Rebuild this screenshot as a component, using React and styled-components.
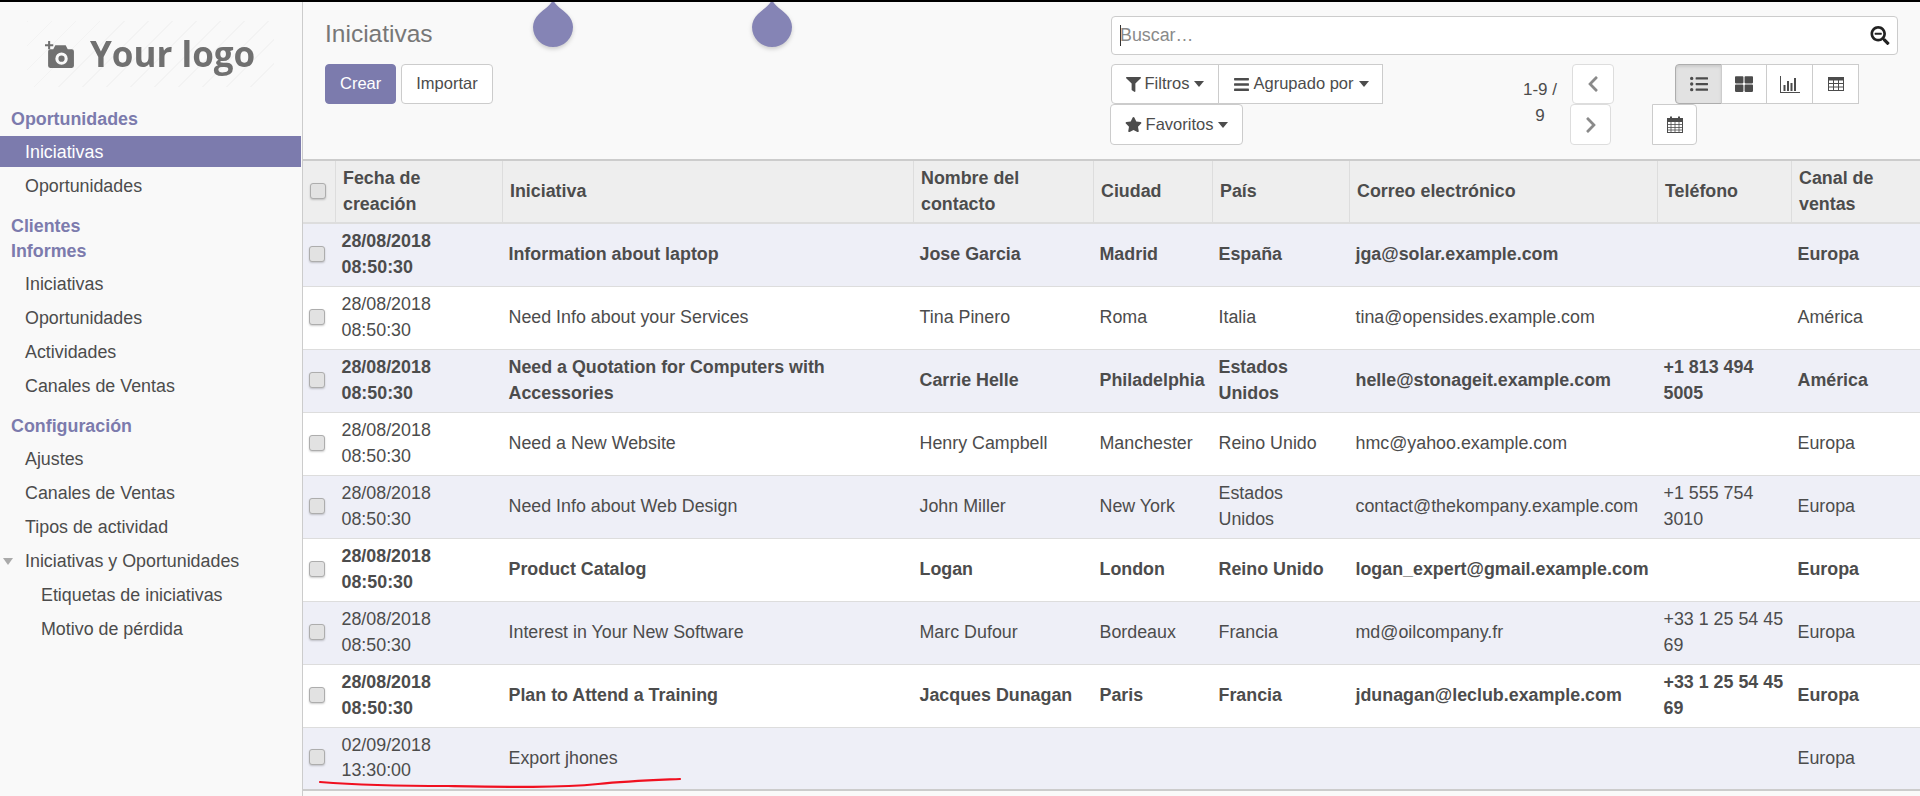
import React from "react";
import styled, { createGlobalStyle } from "styled-components";
import {
  FaFilter,
  FaBars,
  FaStar,
  FaChevronLeft,
  FaChevronRight,
  FaListUl,
  FaThLarge,
  FaSearchMinus,
} from "react-icons/fa";

const GlobalStyle = createGlobalStyle`
  html, body {
    margin: 0;
    padding: 0;
    height: 100%;
    overflow: hidden;
    background: #f9f9f9;
  }
  body {
    font-family: "Liberation Sans", Arial, sans-serif;
    font-size: 17.85px;
    line-height: 25.5px;
    color: #4c4c4c;
  }
`;

const Page = styled.div`
  position: relative;
  display: flex;
  height: 796px;
  box-sizing: border-box;
  border-top: 2px solid #000;
  overflow: hidden;
`;

// Sidebar
const Sidebar = styled.aside`
  flex: 0 0 302px;
  box-sizing: border-box;
  padding: 19px 1px 0 0;
`;

const LogoBox = styled.div`
  display: flex;
  align-items: center;
  width: 247px;
  height: 66px;
  margin: 0 0 19px 27px;
  padding-left: 18px;
  box-sizing: border-box;
  gap: 14px;
  background: repeating-linear-gradient(
    -45deg,
    #f9f9f9 0 16px,
    #f3f3f3 16px 17px
  );
`;

const LogoText = styled.span`
  font-family: "Open Sans", "Liberation Sans", sans-serif;
  font-weight: 700;
  font-size: 35px;
  line-height: 40px;
  color: #707070;
  filter: blur(0.6px);
  white-space: nowrap;
`;

const LogoIcon = styled.svg`
  width: 31px;
  height: 29px;
  filter: blur(0.4px);
  flex: none;
`;

const NavHeading = styled.div`
  height: 25px;
  line-height: 27px;
  padding-left: 11px;
  margin-top: ${(props) => props.$top || 0}px;
  font-weight: 700;
  color: #7c7bad;
`;

const NavItem = styled.div`
  position: relative;
  height: 31px;
  line-height: 33px;
  margin-top: ${(props) => (props.$first ? 5 : 3)}px;
  padding-left: ${(props) => (props.$sub ? 41 : 25)}px;
  background: ${(props) => (props.$active ? "#7c7bad" : "transparent")};
  color: ${(props) => (props.$active ? "#fff" : "#4c4c4c")};
  white-space: nowrap;
`;

const NavCaret = styled.span`
  position: absolute;
  left: 3px;
  top: 13px;
  border-left: 5px solid transparent;
  border-right: 5px solid transparent;
  border-top: 7px solid #aaa;
`;

// Main
const Main = styled.main`
  flex: 1;
  min-width: 0;
  border-left: 1px solid #ccc;
`;

const ControlPanel = styled.div`
  display: flex;
  height: 157px;
  box-sizing: border-box;
  padding: 14px 0 0 22px;
`;

const PanelLeft = styled.div`
  flex: 0 0 786px;
`;

const PanelRight = styled.div`
  flex: 0 0 787px;
`;

const Title = styled.div`
  height: 34px;
  line-height: 36px;
  font-size: 24.5px;
  color: #777;
`;

const ActionRow = styled.div`
  display: flex;
  gap: 5px;
  margin-top: 14px;
`;

const Button = styled.button`
  height: 40px;
  padding: 0 14px;
  box-sizing: border-box;
  font: inherit;
  font-size: 16.5px;
  border-radius: 4px;
  border: 1px solid ${(props) => (props.$primary ? "#7c7bad" : "#ccc")};
  background: ${(props) => (props.$primary ? "#7c7bad" : "#fff")};
  color: ${(props) => (props.$primary ? "#fff" : "#4c4c4c")};
`;

const SearchBox = styled.div`
  position: relative;
  display: flex;
  align-items: center;
  height: 39px;
  box-sizing: border-box;
  border: 1px solid #ccc;
  border-radius: 4px;
  background: #fff;
  padding: 0 7px 0 8px;
`;

const SearchInput = styled.input`
  flex: 1;
  min-width: 0;
  border: 0;
  outline: 0;
  padding: 0;
  background: transparent;
  font: inherit;
  color: #4c4c4c;
  &::placeholder {
    color: #8a8a8a;
    opacity: 1;
  }
`;

const Caret = styled.span`
  position: absolute;
  left: 8px;
  top: 8px;
  width: 1px;
  height: 21px;
  background: #333;
`;

const SearchIcon = styled(FaSearchMinus)`
  width: 20px;
  height: 19px;
  color: #222;
`;

const OptionsRow = styled.div`
  display: grid;
  grid-template-columns: 404px 55px 82px 207px;
  margin-top: 9px;
`;

const SearchOptions = styled.div`
  display: flex;
  flex-wrap: wrap;
  align-content: flex-start;
`;

const OptionButton = styled.button`
  display: flex;
  align-items: center;
  justify-content: center;
  gap: 4px;
  width: ${(props) => props.$width}px;
  height: ${(props) => (props.$tall ? 41 : 40)}px;
  margin-left: ${(props) => props.$shift || 0}px;
  padding: 0;
  box-sizing: border-box;
  font: inherit;
  font-size: 16.5px;
  color: #4c4c4c;
  background: #fff;
  border: 1px solid #ccc;
  border-radius: ${(props) => props.$radius || "4px"};
  svg {
    flex: none;
    color: #4c4c4c;
  }
`;

const DownArrow = styled.span`
  flex: none;
  margin-left: 1px;
  border-left: 5.5px solid transparent;
  border-right: 5.5px solid transparent;
  border-top: 6px solid #4c4c4c;
`;

const OptionBreak = styled.div`
  flex-basis: 100%;
  height: 0;
`;

const PagerText = styled.div`
  width: 44px;
  margin-left: 3px;
  padding-top: 13px;
  font-size: 17px;
  text-align: center;
  line-height: 26px;
`;

const PagerButtons = styled.div`
  display: flex;
  flex-direction: column;
  align-items: flex-start;
`;

const PagerButton = styled.button`
  display: flex;
  align-items: center;
  justify-content: center;
  width: ${(props) => props.$width}px;
  height: ${(props) => (props.$tall ? 41 : 40)}px;
  margin-left: ${(props) => props.$shift || 0}px;
  padding: 0;
  box-sizing: border-box;
  background: #fff;
  border: 1px solid #ddd;
  border-radius: 4px;
  color: #8a8a8a;
  font-size: 18px;
`;

const ViewSwitch = styled.div`
  display: flex;
  flex-direction: column;
  align-items: flex-start;
`;

const ViewRow = styled.div`
  display: flex;
  margin-left: ${(props) => props.$indent || 0}px;
`;

const ViewButton = styled.button`
  display: flex;
  align-items: center;
  justify-content: center;
  width: ${(props) => props.$width}px;
  height: ${(props) => (props.$tall ? 41 : 40)}px;
  padding: 0;
  box-sizing: border-box;
  margin-left: ${(props) => (props.$joined ? -1 : 0)}px;
  color: #4c4c4c;
  font-size: 18px;
  background: ${(props) => (props.$active ? "#e2e2e2" : "#fff")};
  border: 1px solid ${(props) => (props.$active ? "#adadad" : "#ccc")};
  border-radius: ${(props) => props.$radius || "0"};
  box-shadow: ${(props) =>
    props.$active ? "inset 0 2px 3px rgba(0, 0, 0, 0.1)" : "none"};
`;

// Table
const ListTable = styled.table`
  width: 1617px;
  table-layout: fixed;
  border-collapse: collapse;
  border-bottom: 2px solid #ccc;
`;

const HeadRow = styled.tr`
  height: 63px;
  background: #eee;
  border-top: 2px solid #ccc;
  border-bottom: 2px solid #ddd;
`;

const HeadCell = styled.th`
  padding: 0 7px 0 7.5px;
  text-align: left;
  font-weight: 700;
  vertical-align: middle;
  border-right: 1px solid #ddd;
  &:last-child {
    border-right: 0;
  }
`;

const Row = styled.tr`
  height: 63px;
  background: ${(props) => (props.$odd ? "#eeeff7" : "#fff")};
  border-bottom: 1px solid #ddd;
  font-weight: ${(props) => (props.$bold ? 700 : 400)};
`;

const Cell = styled.td`
  padding: 5px 6px 5px 6.5px;
  vertical-align: middle;
`;

const CheckCell = styled.td`
  padding: 0 0 2px 6px;
  vertical-align: middle;
`;

const CheckHead = styled.th`
  padding: 0 0 2px 7px;
  vertical-align: middle;
  border-right: 1px solid #ddd;
`;

const Check = styled.span`
  display: block;
  box-sizing: border-box;
  width: 16px;
  height: 16px;
  background: #e2e2e2;
  border: 1px solid #adadad;
  border-radius: 3px;
  box-shadow: 0 1px 2px rgba(0, 0, 0, 0.2);
`;

const DateValue = styled.span`
  display: block;
  max-width: 110px;
`;

// Overlays on top of the screenshot
const Drop = styled.svg`
  position: absolute;
  top: -2px;
  left: ${(props) => props.$left}px;
  width: 44px;
  height: 52px;
  filter: drop-shadow(0 2px 2px rgba(0, 0, 0, 0.18));
`;

const RedLine = styled.svg`
  position: absolute;
  left: 318px;
  top: 772px;
  width: 366px;
  height: 16px;
`;

const columns = [
  { width: 167, label: "Fecha de creación" },
  { width: 411, label: "Iniciativa" },
  { width: 180, label: "Nombre del contacto" },
  { width: 119, label: "Ciudad" },
  { width: 137, label: "País" },
  { width: 308, label: "Correo electrónico" },
  { width: 134, label: "Teléfono" },
  { width: 129, label: "Canal de ventas" },
];

const rows = [
  { bold: true, date: "28/08/2018 08:50:30", name: "Information about laptop", contact: "Jose Garcia", city: "Madrid", country: "España", email: "jga@solar.example.com", phone: "", channel: "Europa" },
  { date: "28/08/2018 08:50:30", name: "Need Info about your Services", contact: "Tina Pinero", city: "Roma", country: "Italia", email: "tina@opensides.example.com", phone: "", channel: "América" },
  { bold: true, date: "28/08/2018 08:50:30", name: "Need a Quotation for Computers with Accessories", contact: "Carrie Helle", city: "Philadelphia", country: "Estados Unidos", email: "helle@stonageit.example.com", phone: "+1 813 494 5005", channel: "América" },
  { date: "28/08/2018 08:50:30", name: "Need a New Website", contact: "Henry Campbell", city: "Manchester", country: "Reino Unido", email: "hmc@yahoo.example.com", phone: "", channel: "Europa" },
  { date: "28/08/2018 08:50:30", name: "Need Info about Web Design", contact: "John Miller", city: "New York", country: "Estados Unidos", email: "contact@thekompany.example.com", phone: "+1 555 754 3010", channel: "Europa" },
  { bold: true, date: "28/08/2018 08:50:30", name: "Product Catalog", contact: "Logan", city: "London", country: "Reino Unido", email: "logan_expert@gmail.example.com", phone: "", channel: "Europa" },
  { date: "28/08/2018 08:50:30", name: "Interest in Your New Software", contact: "Marc Dufour", city: "Bordeaux", country: "Francia", email: "md@oilcompany.fr", phone: "+33 1 25 54 45 69", channel: "Europa" },
  { bold: true, date: "28/08/2018 08:50:30", name: "Plan to Attend a Training", contact: "Jacques Dunagan", city: "Paris", country: "Francia", email: "jdunagan@leclub.example.com", phone: "+33 1 25 54 45 69", channel: "Europa" },
  { date: "02/09/2018 13:30:00", name: "Export jhones", contact: "", city: "", country: "", email: "", phone: "", channel: "Europa" },
];

const ChartIcon = () => (
  <svg width="20" height="17" viewBox="0 0 20 17" fill="#4c4c4c">
    <path d="M0 0h1v16h19v1H0z" />
    <rect x="3.500" y="9" width="2" height="6" />
    <rect x="7" y="5" width="2" height="10" />
    <rect x="10.500" y="7" width="2" height="8" />
    <rect x="14" y="2" width="2" height="13" />
  </svg>
);

const TableIcon = () => (
  <svg width="16" height="14" viewBox="0 0 16 14" fill="none" stroke="#4c4c4c">
    <path d="M0 0h16v3.500H0z" fill="#4c4c4c" stroke="none" />
    <rect x="0.500" y="0.500" width="15" height="13" />
    <path d="M0.500 6.500h15M0.500 10h15M5.500 3v11M10.500 3v11" />
  </svg>
);

const CalendarIcon = () => (
  <svg width="16" height="17" viewBox="0 0 16 17" fill="none" stroke="#4c4c4c">
    <rect x="0.500" y="2.500" width="15" height="14" />
    <path d="M0.500 8.500h15M0.500 11.500h15M0.500 14h15M4 5.500v11M8 5.500v11M12 5.500v11" strokeWidth="0.8" />
    <path d="M0.500 2.500h15v3h-15z" fill="#4c4c4c" />
    <path d="M4 0.500v3M12 0.500v3" strokeWidth="2" />
  </svg>
);

const DropShape = ({ left }) => (
  <Drop $left={left} viewBox="0 0 44 52">
    <path
      d="M22 0 C25 6 31 9 36 14 C40 18 42 22.500 42 27 A20 20 0 0 1 2 27 C2 22.500 4 18 8 14 C13 9 19 6 22 0 Z"
      fill="#8584b5"
    />
  </Drop>
);

export default function App() {
  return (
    <>
      <GlobalStyle />
      <Page>
        <Sidebar>
          <LogoBox>
            <LogoIcon viewBox="0 0 30 28" fill="#707070">
              <path d="M0 4h3V1h2v3h3v2H5v3H3V6H0z" />
              <path
                fillRule="evenodd"
                d="M5 9h3l2-4h10l2 4h4a2 2 0 0 1 2 2v14a2 2 0 0 1-2 2H5a2 2 0 0 1-2-2V11a2 2 0 0 1 2-2zm11 3a6 6 0 1 0 0 12 6 6 0 0 0 0-12zm0 3a3 3 0 1 1 0 6 3 3 0 0 1 0-6z"
              />
            </LogoIcon>
            <LogoText>Your logo</LogoText>
          </LogoBox>
          <NavHeading>Oportunidades</NavHeading>
          <NavItem $first $active>Iniciativas</NavItem>
          <NavItem>Oportunidades</NavItem>
          <NavHeading $top={12}>Clientes</NavHeading>
          <NavHeading>Informes</NavHeading>
          <NavItem $first>Iniciativas</NavItem>
          <NavItem>Oportunidades</NavItem>
          <NavItem>Actividades</NavItem>
          <NavItem>Canales de Ventas</NavItem>
          <NavHeading $top={12}>Configuración</NavHeading>
          <NavItem $first>Ajustes</NavItem>
          <NavItem>Canales de Ventas</NavItem>
          <NavItem>Tipos de actividad</NavItem>
          <NavItem>
            <NavCaret />
            Iniciativas y Oportunidades
          </NavItem>
          <NavItem $sub>Etiquetas de iniciativas</NavItem>
          <NavItem $sub>Motivo de pérdida</NavItem>
        </Sidebar>

        <Main>
          <ControlPanel>
            <PanelLeft>
              <Title>Iniciativas</Title>
              <ActionRow>
                <Button $primary>Crear</Button>
                <Button>Importar</Button>
              </ActionRow>
            </PanelLeft>
            <PanelRight>
              <SearchBox>
                <Caret />
                <SearchInput placeholder="Buscar…" />
                <SearchIcon />
              </SearchBox>
              <OptionsRow>
                <SearchOptions>
                  <OptionButton $width={108} $radius="4px 0 0 4px">
                    <FaFilter size={15} /> Filtros <DownArrow />
                  </OptionButton>
                  <OptionButton $width={165} $shift={-1} $radius="0">
                    <FaBars size={17} /> Agrupado por <DownArrow />
                  </OptionButton>
                  <OptionBreak />
                  <OptionButton $width={133} $shift={-1} $tall>
                    <FaStar size={17} /> Favoritos <DownArrow />
                  </OptionButton>
                </SearchOptions>
                <PagerText>1-9 / 9</PagerText>
                <PagerButtons>
                  <PagerButton $width={42} $shift={2}><FaChevronLeft /></PagerButton>
                  <PagerButton $width={41} $tall><FaChevronRight /></PagerButton>
                </PagerButtons>
                <ViewSwitch>
                  <ViewRow $indent={23}>
                    <ViewButton $width={47} $active $radius="4px 0 0 4px"><FaListUl /></ViewButton>
                    <ViewButton $width={46} $joined><FaThLarge /></ViewButton>
                    <ViewButton $width={47} $joined><ChartIcon /></ViewButton>
                    <ViewButton $width={47} $joined><TableIcon /></ViewButton>
                  </ViewRow>
                  <ViewRow>
                    <ViewButton $width={45} $tall $radius="0 4px 4px 0"><CalendarIcon /></ViewButton>
                  </ViewRow>
                </ViewSwitch>
              </OptionsRow>
            </PanelRight>
          </ControlPanel>

          <ListTable>
            <colgroup>
              <col style={{ width: 32 }} />
              {columns.map((c) => (
                <col key={c.label} style={{ width: c.width }} />
              ))}
            </colgroup>
            <thead>
              <HeadRow>
                <CheckHead><Check /></CheckHead>
                {columns.map((c) => (
                  <HeadCell key={c.label}>{c.label}</HeadCell>
                ))}
              </HeadRow>
            </thead>
            <tbody>
              {rows.map((r, i) => (
                <Row key={r.name} $odd={i % 2 === 0} $bold={r.bold}>
                  <CheckCell><Check /></CheckCell>
                  <Cell><DateValue>{r.date}</DateValue></Cell>
                  <Cell>{r.name}</Cell>
                  <Cell>{r.contact}</Cell>
                  <Cell>{r.city}</Cell>
                  <Cell>{r.country}</Cell>
                  <Cell>{r.email}</Cell>
                  <Cell>{r.phone}</Cell>
                  <Cell>{r.channel}</Cell>
                </Row>
              ))}
            </tbody>
          </ListTable>
        </Main>

        <DropShape left={531} />
        <DropShape left={750} />
        <RedLine viewBox="0 0 366 16">
          <path
            d="M2 8 C40 11 80 12 130 12 C190 13 240 14 280 10 C310 7 340 6 362 5"
            fill="none"
            stroke="#f01020"
            strokeWidth="2.200"
            strokeLinecap="round"
          />
        </RedLine>
      </Page>
    </>
  );
}
